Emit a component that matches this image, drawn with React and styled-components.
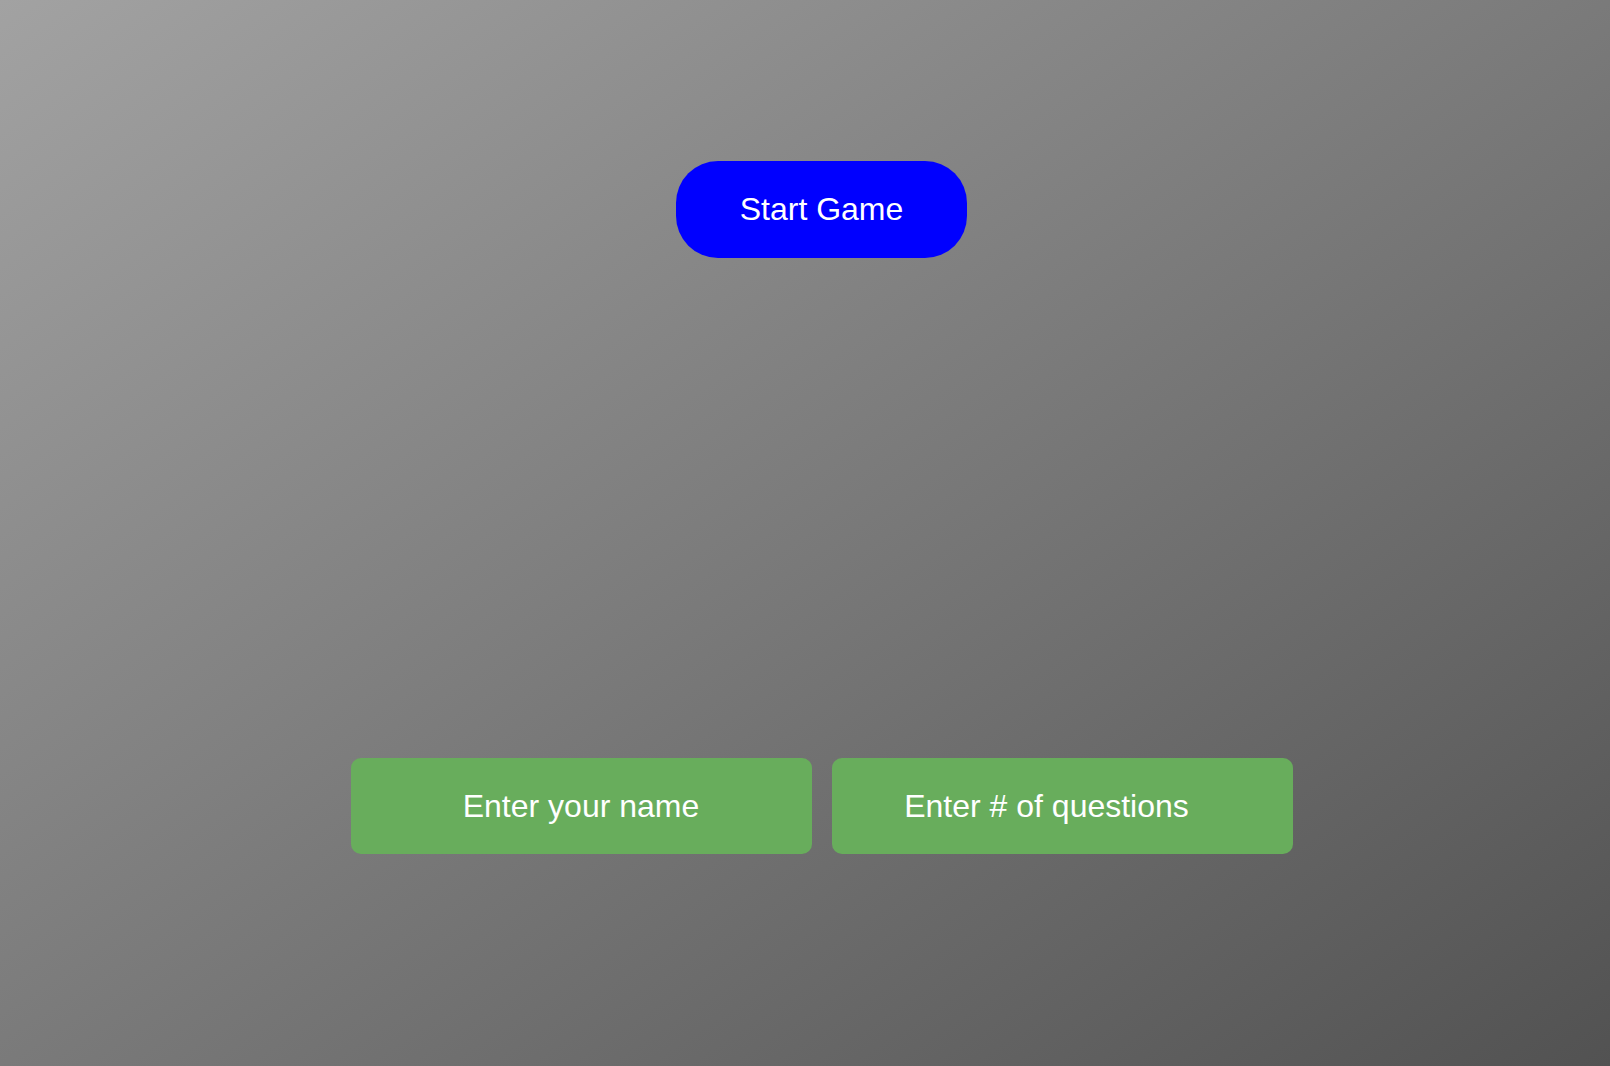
import React, { useState } from 'react';
import styled, { createGlobalStyle } from 'styled-components';

const GlobalStyle = createGlobalStyle`
  html, body {
    margin: 0;
    padding: 0;
  }
  body {
    font-family: "Liberation Sans", Arial, sans-serif;
  }
`;

const App = () => {
  const [name, setName] = useState('');
  const [count, setCount] = useState('');

  return (
    <Main>
      <GlobalStyle />
      <StartButton type="button">Start Game</StartButton>
      <FieldRow>
        <Field
          type="text"
          placeholder="Enter your name"
          value={name}
          onChange={(e) => setName(e.target.value)}
        />
        <Field
          type="number"
          placeholder="Enter # of questions"
          value={count}
          shift="31"
          onChange={(e) => setCount(e.target.value)}
        />
      </FieldRow>
    </Main>
  );
};

const Main = styled.div`
  width: 100vw;
  height: 100vh;
  box-sizing: border-box;
  padding: 161px 0 0 33px;
  display: flex;
  flex-direction: column;
  align-items: center;
  gap: 500px;
  background: linear-gradient(to bottom right, #a2a2a2, #525252);
  overflow: hidden;
`;

const StartButton = styled.button`
  width: 291px;
  height: 97px;
  border: none;
  border-radius: 42px;
  background: #0000ff;
  color: #ffffff;
  font-family: "Liberation Sans", Arial, sans-serif;
  font-size: 32px;
  cursor: pointer;
  padding: 0;
`;

const FieldRow = styled.div`
  display: flex;
  gap: 20px;
`;

const Field = styled.input`
  width: 461px;
  height: 96px;
  box-sizing: border-box;
  border: none;
  border-radius: 10px;
  background: #68ad5c;
  color: #ffffff;
  font-family: "Liberation Sans", Arial, sans-serif;
  font-size: 32px;
  text-align: center;
  padding: 0 ${(props) => props.shift || 0}px 0 0;
  outline: none;
  appearance: textfield;
  -moz-appearance: textfield;

  &::placeholder {
    color: #ffffff;
    opacity: 1;
  }
  &::-webkit-inner-spin-button,
  &::-webkit-outer-spin-button {
    -webkit-appearance: none;
    margin: 0;
  }
`;

export default App;
